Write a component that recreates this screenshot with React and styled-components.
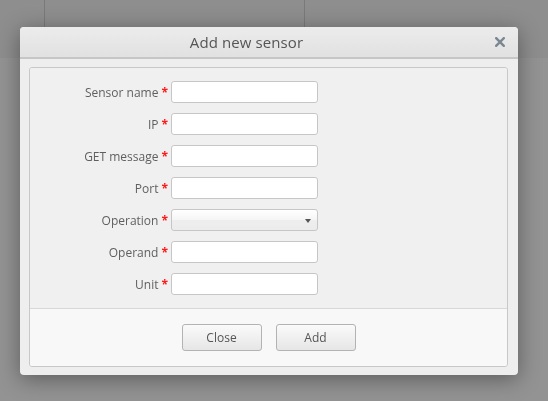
import React from "react";
import styled, { createGlobalStyle } from "styled-components";

const GlobalStyle = createGlobalStyle`
  html, body {
    margin: 0;
    padding: 0;
    background: #939393;
    font-family: "Open Sans", "Liberation Sans", sans-serif;
  }
`;

const fields = [
  { label: "Sensor name" },
  { label: "IP" },
  { label: "GET message" },
  { label: "Port" },
  { label: "Operation", select: true },
  { label: "Operand" },
  { label: "Unit" },
];

const App = () => {
  return (
    <>
      <GlobalStyle />
      <Page>
        <TopBar>
          <TopCell $w={44} />
          <TopCell $w={259} />
          <TopCell />
        </TopBar>
      </Page>
      <Backdrop>
        <Dialog>
          <Header>
            <Title>Add new sensor</Title>
            <CloseX>
              <svg width="10" height="10" viewBox="0 0 10 10">
                <path
                  d="M1.2 1.2 L8.8 8.8 M8.8 1.2 L1.2 8.8"
                  stroke="#7b8893"
                  strokeWidth="2.4"
                  strokeLinecap="square"
                />
              </svg>
            </CloseX>
          </Header>
          <Panel>
            <Form>
              {fields.map((f) => (
                <Row key={f.label}>
                  <Label>
                    {f.label}
                    <Req>*</Req>
                  </Label>
                  {f.select ? (
                    <Select>
                      <Arrow />
                    </Select>
                  ) : (
                    <Input />
                  )}
                </Row>
              ))}
            </Form>
            <Footer>
              <Button>Close</Button>
              <Button>Add</Button>
            </Footer>
          </Panel>
        </Dialog>
      </Backdrop>
    </>
  );
};

const Page = styled.div`
  width: 548px;
  height: 401px;
  background: #939393;
`;

const TopBar = styled.div`
  display: flex;
  height: 58px;
  background: #8e8e8e;
`;

const TopCell = styled.div`
  width: ${(p) => (p.$w ? `${p.$w}px` : "auto")};
  flex: ${(p) => (p.$w ? "none" : "1")};
  border-right: 1px solid #7a7a7a;
  &:last-child {
    border-right: none;
  }
`;

const Backdrop = styled.div`
  position: fixed;
  inset: 0;
  padding: 27px 0 0 20px;
`;

const Dialog = styled.div`
  width: 498px;
  box-sizing: border-box;
  background: #eeeeee;
  border-radius: 4px;
  padding-bottom: 8px;
  box-shadow: 0 4px 22px rgba(0, 0, 0, 0.38);
`;

const Header = styled.div`
  display: flex;
  align-items: center;
  height: 30px;
  border-bottom: 2px solid #c6c6c6;
  background: linear-gradient(#ececec, #e1e1e1);
  border-radius: 4px 4px 0 0;
`;

const Title = styled.div`
  flex: 1;
  text-align: center;
  padding-right: 17px;
  font-size: 15px;
  color: #555555;
  letter-spacing: 0.1px;
`;

const CloseX = styled.div`
  display: flex;
  justify-content: center;
  align-items: center;
  width: 20px;
  height: 20px;
  margin-right: 8px;
`;

const Panel = styled.div`
  margin: 8px 10px 0 9px;
  border: 1px solid #c8c8c8;
  border-radius: 3px;
  overflow: hidden;
`;

const Form = styled.div`
  display: flex;
  flex-direction: column;
  gap: 10px;
  padding: 13px 0 13px;
  background: #f0f0f0;
  border-bottom: 1px solid #d8d8d8;
`;

const Row = styled.div`
  display: grid;
  grid-template-columns: 138px 147px;
  column-gap: 3px;
  align-items: center;
`;

const Label = styled.label`
  text-align: right;
  font-size: 12px;
  color: #5f5f5f;
  white-space: nowrap;
`;

const Req = styled.span`
  color: #ff1a1a;
  margin-left: 3px;
  font-weight: 700;
`;

const Input = styled.div`
  height: 22px;
  box-sizing: border-box;
  background: #ffffff;
  border: 1px solid #c6c6c6;
  border-radius: 3px;
`;

const Select = styled.div`
  position: relative;
  height: 22px;
  box-sizing: border-box;
  border: 1px solid #c6c6c6;
  border-radius: 3px;
  background: linear-gradient(#ffffff 0%, #f5f5f5 50%, #eeeeee 52%, #ececec 100%);
`;

const Arrow = styled.span`
  position: absolute;
  right: 6px;
  top: 9px;
  width: 0;
  height: 0;
  border-left: 3.5px solid transparent;
  border-right: 3.5px solid transparent;
  border-top: 4px solid #555555;
`;

const Footer = styled.div`
  display: flex;
  justify-content: center;
  gap: 14px;
  padding: 15px 0 15px;
  background: #f8f8f8;
`;

const Button = styled.button`
  width: 80px;
  height: 27px;
  box-sizing: border-box;
  border: 1px solid #b3b3b3;
  border-radius: 3px;
  background: linear-gradient(#fafafa, #e6e6e6);
  font-family: "Open Sans", "Liberation Sans", sans-serif;
  font-size: 12px;
  color: #555555;
  padding: 0;
`;

export default App;
